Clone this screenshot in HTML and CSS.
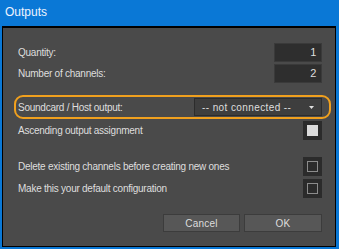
FILE: index.html
```html
<!DOCTYPE html>
<html lang="en">
<head>
    <meta charset="UTF-8">
    <title>Outputs</title>
    <link rel="stylesheet" href="styles.css">
</head>
<body>
    <div class="window">
        <div class="title-bar">Outputs</div>
        <div class="panel">
            <div class="row">
                <span class="label">Quantity:</span>
                <div class="number-box">1</div>
            </div>
            <div class="row">
                <span class="label">Number of channels:</span>
                <div class="number-box">2</div>
            </div>

            <div class="highlight">
                <div class="row">
                    <span class="label">Soundcard / Host output:</span>
                    <div class="dropdown">
                        <span>-- not connected --</span>
                        <svg class="arrow" width="5" height="3" viewBox="0 0 5 3">
                            <path d="M0 0 H5 L2.5 3 Z" fill="#e0e0e0"/>
                        </svg>
                    </div>
                </div>
            </div>

            <div class="row row-check">
                <span class="label">Ascending output assignment</span>
                <div class="checkbox checked"><span></span></div>
            </div>

            <div class="row row-check row-spaced">
                <span class="label">Delete existing channels before creating new ones</span>
                <div class="checkbox"><span></span></div>
            </div>
            <div class="row row-check">
                <span class="label">Make this your default configuration</span>
                <div class="checkbox"><span></span></div>
            </div>

            <div class="buttons">
                <button class="btn btn-cancel">Cancel</button>
                <button class="btn btn-ok">OK</button>
            </div>
        </div>
    </div>
</body>
</html>
```

FILE: styles.css
```css
:root {
    --title-blue: #0a78d6;
    --panel-bg: #4a4a4a;
    --text: #dedede;
    --field-bg: #2e2e2e;
    --orange: #f0a01e;
}

* {
    margin: 0;
    padding: 0;
    box-sizing: border-box;
}

body {
    width: 339px;
    height: 249px;
    overflow: hidden;
    background-color: var(--title-blue);
    font-family: 'Liberation Sans', Arial, sans-serif;
    font-size: 10px;
    letter-spacing: -0.25px;
    color: var(--text);
}

.window {
    display: flex;
    flex-direction: column;
    height: 249px;
}

.title-bar {
    height: 26px;
    padding: 5px 0 0 5px;
    font-size: 12px;
    letter-spacing: 0;
    color: #eef4ff;
}

.panel {
    flex: 1;
    margin: 0 3px 2px 2px;
    background-color: var(--panel-bg);
    border: 1px solid #000;
    border-top-width: 2px;
    padding: 14px 13px 0 15px;
    display: flex;
    flex-direction: column;
}

.row {
    display: flex;
    justify-content: space-between;
    align-items: center;
    height: 20px;
    margin-bottom: 1px;
}

.number-box {
    width: 48px;
    height: 19px;
    background-color: var(--field-bg);
    border: 1px solid #3a3a3a;
    text-align: right;
    padding-right: 5px;
    line-height: 17px;
    font-size: 11px;
}

.highlight {
    margin: 11px -9px 0 -4px;
    height: 24px;
    border: 2px solid var(--orange);
    border-radius: 9px;
    padding: 0 7px 0 2px;
    display: flex;
    align-items: center;
}

.highlight .row {
    flex: 1;
    margin: 0;
}

.dropdown {
    width: 128px;
    height: 18px;
    background-color: #3e3e3e;
    border: 1px solid #2c2c2c;
    display: flex;
    align-items: center;
    justify-content: space-between;
    padding: 0 7px 0 7px;
    letter-spacing: 0.4px;
}

.arrow {
    margin-top: 1px;
}

.row-check {
    height: 20px;
    margin-top: 1px;
}

.row-spaced {
    margin-top: 15px;
}

.checkbox {
    width: 19px;
    height: 19px;
    background-color: #2b2b2b;
    display: flex;
    align-items: center;
    justify-content: center;
}

.checkbox span {
    width: 11px;
    height: 11px;
    border: 1px solid #8c8c8c;
}

.checkbox.checked span {
    background-color: #dcdcdc;
    border-color: #dcdcdc;
}

.buttons {
    display: flex;
    justify-content: flex-end;
    gap: 4px;
    margin-top: 15px;
}

.btn {
    height: 18px;
    background-color: #575757;
    border: 1px solid #3c3c3c;
    color: var(--text);
    font-family: inherit;
    font-size: 10px;
    letter-spacing: 0.2px;
}

.btn-cancel {
    width: 77px;
}

.btn-ok {
    width: 78px;
}
```
